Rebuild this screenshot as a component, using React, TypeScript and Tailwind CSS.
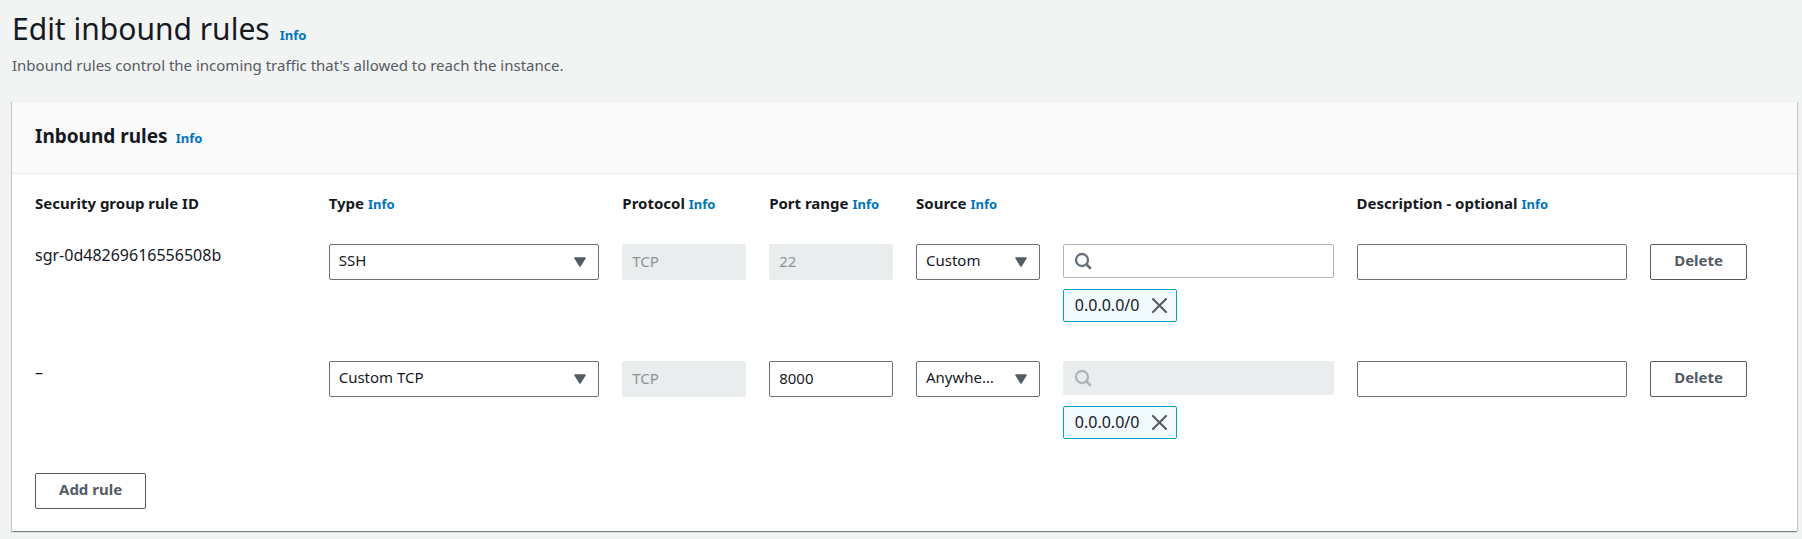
import type { ReactNode } from "react";

type Rule = {
  id: string;
  type: string;
  protocol: string;
  port: string;
  portLocked: boolean;
  source: string;
  searchLocked: boolean;
  cidr: string;
};

const rules: Rule[] = [
  { id: "sgr-0d48269616556508b", type: "SSH", protocol: "TCP", port: "22", portLocked: true, source: "Custom", searchLocked: false, cidr: "0.0.0.0/0" },
  { id: "–", type: "Custom TCP", protocol: "TCP", port: "8000", portLocked: false, source: "Anywhere-IPv4", searchLocked: true, cidr: "0.0.0.0/0" },
];

const rowGrid = "grid grid-cols-12 gap-x-[23px]";

function InfoLink() {
  return (
    <a href="#info" className="text-[13px] font-bold text-[#0073bb]">
      Info
    </a>
  );
}

function ColumnHeader({ span, info = true, children }: { span: string; info?: boolean; children: ReactNode }) {
  return (
    <th scope="col" className={`${span} text-left text-[15px] leading-5 font-bold whitespace-nowrap`}>
      {children} {info && <InfoLink />}
    </th>
  );
}

function SelectField({ label, value }: { label: string; value: string }) {
  return (
    <div className="relative">
      <select
        aria-label={label}
        defaultValue={value}
        className="block h-9 w-full appearance-none rounded-[2px] border border-[#687078] bg-white pr-[42px] pb-1 pl-[9px] text-[15px] text-ellipsis"
      >
        <option>{value}</option>
      </select>
      <svg viewBox="0 0 12 10" className="pointer-events-none absolute top-[13px] right-[13px] h-[10px] w-3 fill-[#545b64] stroke-[#545b64]">
        <path d="M1 1H11L6 9Z" strokeWidth="1.5" strokeLinejoin="round" />
      </svg>
    </div>
  );
}

function TextField({ label, value, disabled = false }: { label: string; value?: string; disabled?: boolean }) {
  return (
    <input
      type="text"
      aria-label={label}
      defaultValue={value}
      disabled={disabled}
      className={`block h-9 w-full rounded-[2px] border px-[9px] pb-[2px] text-[15px] ${disabled ? "border-[#e9eded] bg-[#e9eded] text-[#879596]" : "border-[#687078] bg-white"}`}
    />
  );
}

function SearchField({ disabled }: { disabled: boolean }) {
  return (
    <div className="relative">
      <input
        type="search"
        aria-label="Search sources"
        disabled={disabled}
        className={`block h-[34px] w-full rounded-[2px] border pr-3 pl-9 text-[15px] ${disabled ? "border-[#e9eded] bg-[#e9eded]" : "border-[#aab7b8] bg-white"}`}
      />
      <svg
        viewBox="0 0 18 18"
        className={`pointer-events-none absolute top-2 left-[11px] size-[18px] fill-none ${disabled ? "stroke-[#aab7b8]" : "stroke-[#687078]"}`}
      >
        <circle cx="8" cy="8" r="6" strokeWidth="2.3" />
        <path d="M12.3 12.3L16.8 16.8" strokeWidth="2.7" />
      </svg>
    </div>
  );
}

function Token({ text }: { text: string }) {
  return (
    <span className="inline-flex h-[33px] items-center gap-[13px] rounded-[2px] border border-[#00a1c9] bg-[#f1faff] pr-[9px] pb-[1px] pl-[11px] text-base">
      {text}
      <button type="button" aria-label={`Remove ${text}`} className="block">
        <svg viewBox="0 0 15 15" className="block size-[15px] fill-none stroke-[#545b64]">
          <path d="M1 1L14 14M14 1L1 14" strokeWidth="2.1" strokeLinecap="round" />
        </svg>
      </button>
    </span>
  );
}

function ActionButton({ children }: { children: ReactNode }) {
  return (
    <button type="button" className="block h-9 rounded-[2px] border border-[#545b64] bg-white px-[23px] pb-1 text-[15px] font-bold text-[#545b64]">
      {children}
    </button>
  );
}

export default function App() {
  return (
    <main className="min-h-screen bg-[#f2f3f3] pt-[9px] pr-[5px] pb-2 pl-3 font-['Noto_Sans','Open_Sans',sans-serif] text-[#16191f]">
      <header>
        <div className="flex items-baseline gap-[10px]">
          <h1 className="text-[30px] leading-10">Edit inbound rules</h1>
          <InfoLink />
        </div>
        <p className="mt-[6px] text-[15px] leading-5 text-[#545b64]">
          Inbound rules control the incoming traffic that's allowed to reach the instance.
        </p>
      </header>

      <section className="mt-[26px] border-t border-[#eaeded] bg-white shadow-[0_1px_1px_0_rgba(0,28,36,0.3),1px_1px_1px_0_rgba(0,28,36,0.15),-1px_1px_1px_0_rgba(0,28,36,0.15)]">
        <div className="flex items-baseline gap-2 border-b border-[#eaeded] bg-[#fafafa] px-[23px] pt-5 pb-[23px]">
          <h2 className="text-[19px] leading-7 font-bold">Inbound rules</h2>
          <InfoLink />
        </div>

        <div className="px-[23px] pt-[19px] pb-[22px]">
          <table className="block">
            <thead className="block">
              <tr className={rowGrid}>
                <ColumnHeader span="col-span-2" info={false}>Security group rule ID</ColumnHeader>
                <ColumnHeader span="col-span-2">Type</ColumnHeader>
                <ColumnHeader span="col-span-1">Protocol</ColumnHeader>
                <ColumnHeader span="col-span-1">Port range</ColumnHeader>
                <ColumnHeader span="col-span-3">Source</ColumnHeader>
                <ColumnHeader span="col-span-3">Description - optional</ColumnHeader>
              </tr>
            </thead>
            <tbody className="block">
              {rules.map((rule) => (
                <tr key={rule.id} className={`${rowGrid} min-h-[117px] pt-[30px]`}>
                  <td className="col-span-2 pt-[1px] text-base leading-5">{rule.id}</td>
                  <td className="col-span-2"><SelectField label="Type" value={rule.type} /></td>
                  <td><TextField label="Protocol" value={rule.protocol} disabled /></td>
                  <td><TextField label="Port range" value={rule.port} disabled={rule.portLocked} /></td>
                  <td><SelectField label="Source" value={rule.source} /></td>
                  <td className="col-span-2 flex flex-col items-stretch gap-[11px]">
                    <SearchField disabled={rule.searchLocked} />
                    <div className="flex"><Token text={rule.cidr} /></div>
                  </td>
                  <td className="col-span-2"><TextField label="Description - optional" /></td>
                  <td><ActionButton>Delete</ActionButton></td>
                </tr>
              ))}
            </tbody>
          </table>
          <div className="mt-[25px]">
            <ActionButton>Add rule</ActionButton>
          </div>
        </div>
      </section>
    </main>
  );
}
